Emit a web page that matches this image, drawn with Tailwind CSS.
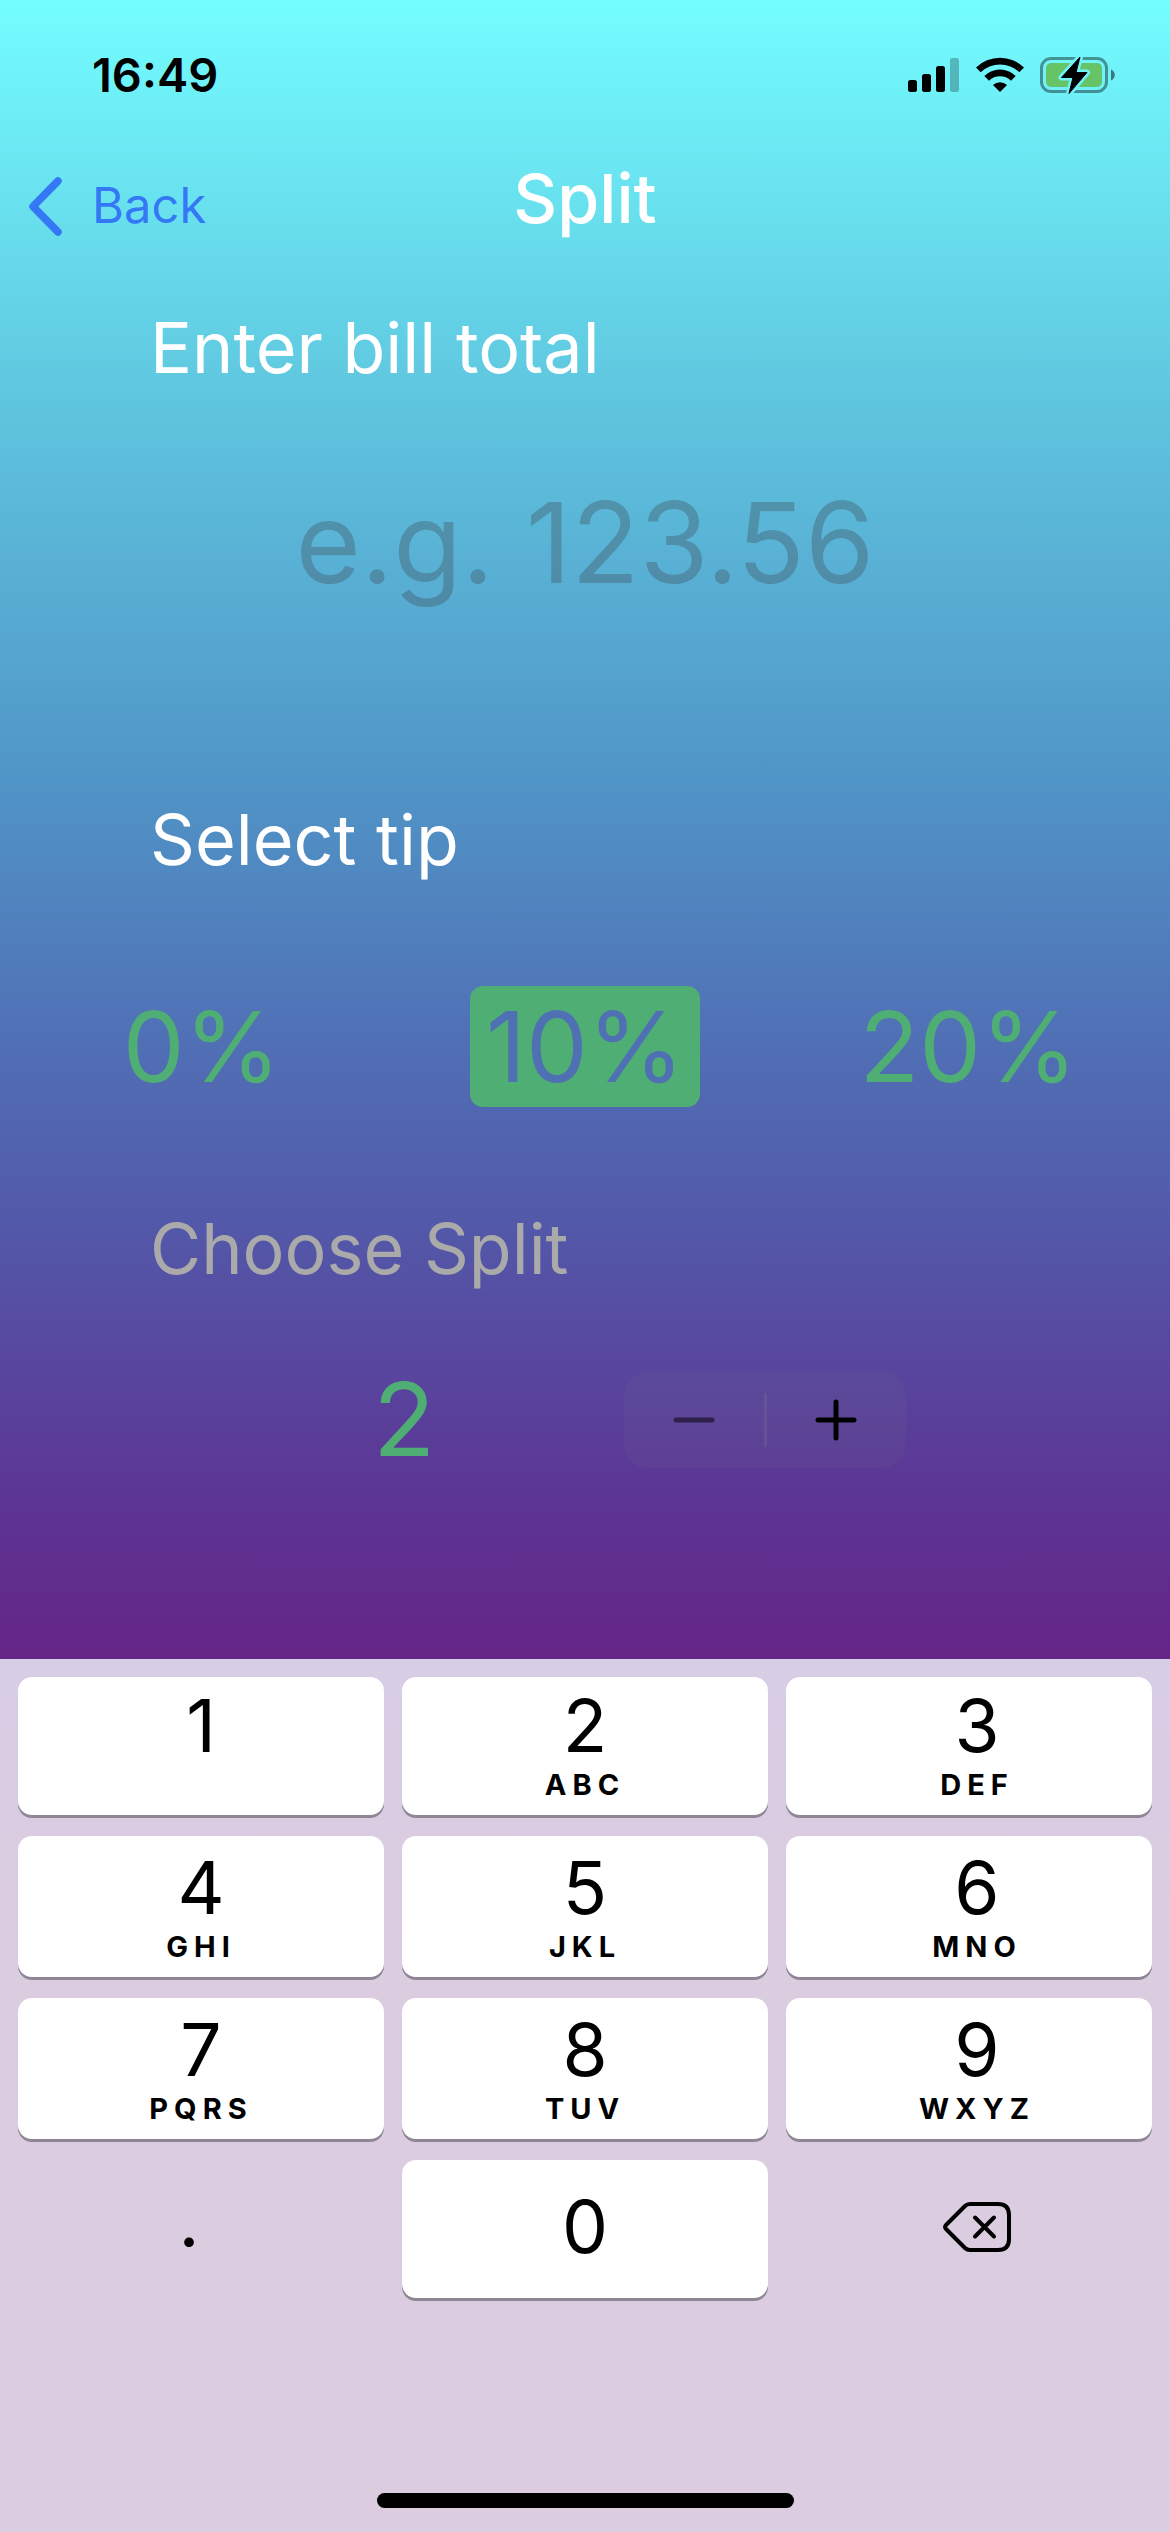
<!DOCTYPE html>
<html lang="en">
<head>
<meta charset="utf-8">
<meta name="viewport" content="width=device-width, initial-scale=1">
<title>Split</title>
<script src="https://cdn.jsdelivr.net/npm/@tailwindcss/browser@4"></script>
</head>
<body class="flex min-h-screen flex-col bg-[#dbcddf] font-['Inter',sans-serif] text-black">

<div class="flex grow flex-col bg-[linear-gradient(to_bottom,#73fdff_0%,#5fc6df_24%,#5095c7_47%,#506fb5_63%,#5358a9_74%,#5c3694_90%,#652587_100%)]">
  <!-- Status bar -->
  <div class="flex h-[150px] items-center justify-between pr-[54px] pl-[92px]">
    <time class="text-[47px] leading-[54px] font-semibold">16:49</time>
    <div class="flex items-center gap-4">
      <svg class="h-9 w-[52px]" viewBox="0 0 52 36" aria-hidden="true">
        <rect x="0" y="23" width="9" height="12" rx="2.5"/>
        <rect x="14" y="17" width="9" height="18" rx="2.5"/>
        <rect x="28" y="9" width="9" height="26" rx="2.5"/>
        <rect x="42" y="1" width="9" height="34" rx="2.5" fill-opacity=".25"/>
      </svg>
      <svg class="h-9 w-12" viewBox="0 0 48 36" aria-hidden="true">
        <path d="M0 10.5A34.5 34.5 0 0 1 48 10.5L43.3 15.2A27.8 27.8 0 0 0 4.7 15.2Z"/>
        <path d="M8.3 19A22.5 22.5 0 0 1 39.7 19L35 23.7A15.8 15.8 0 0 0 13 23.7Z"/>
        <path d="M17 28A10.5 10.5 0 0 1 31 28L24 35Z"/>
      </svg>
      <svg class="h-[38px] w-[76px]" viewBox="0 0 76 38" aria-hidden="true">
        <defs>
          <mask id="bolt-gap">
            <rect width="76" height="38" fill="#fff"/>
            <path d="M40 1 21.5 21.5H33L29 37.5 47 16.5H36Z" fill="#000" stroke="#000" stroke-width="6" stroke-linejoin="round"/>
          </mask>
        </defs>
        <g mask="url(#bolt-gap)">
          <rect x="1.5" y="2.5" width="65" height="33" rx="9.5" fill="none" stroke="#000" stroke-opacity=".4" stroke-width="3"/>
          <rect x="6" y="7" width="56" height="24" rx="5" fill="#66c466"/>
        </g>
        <path d="M71 13.5C76 15.5 76 22.5 71 24.5Z" fill-opacity=".5"/>
        <path d="M40 1 21.5 21.5H33L29 37.5 47 16.5H36Z" stroke="#000" stroke-linejoin="round"/>
      </svg>
    </div>
  </div>

  <!-- Navigation bar -->
  <header class="grid h-[116px] grid-cols-3 items-center">
    <a href="#" class="flex items-center gap-7 pb-1 pl-7 text-[#3478f6]">
      <svg class="h-[60px] w-9" viewBox="0 0 36 60" fill="none" stroke="currentColor" stroke-width="7.5" stroke-linecap="round" stroke-linejoin="round" aria-hidden="true"><path d="M30 5 5 30.500 30 56"/></svg>
      <span class="text-[49px] leading-[60px]">Back</span>
    </a>
    <h1 class="pb-5 text-center text-[68px] leading-[84px] font-medium text-white">Split</h1>
  </header>

  <main class="flex flex-col pt-9 pb-[179px]">
    <label for="bill" class="px-[150px] text-[70px] leading-[92px] text-white">Enter bill total</label>
    <input id="bill" type="text" inputmode="decimal" placeholder="e.g. 123.56" class="mt-18 h-[152px] w-full bg-transparent text-center text-[112px] text-black outline-none placeholder:text-[#3c3c43]/30">

    <h2 class="mt-44 px-[150px] text-[70px] leading-[92px] text-white">Select tip</h2>
    <div class="mt-25 grid grid-cols-3 justify-items-center px-2.5 text-[98px] leading-[121px] text-[#4fae73]">
      <button type="button" class="px-4">0%</button>
      <button type="button" class="rounded-[13px] bg-[#4fae73] px-4 text-[#5070b4]" aria-pressed="true">10%</button>
      <button type="button" class="px-4">20%</button>
    </div>

    <h2 class="mt-24 px-[150px] text-[70px] leading-[92px] text-[#aaaaaa]">Choose Split</h2>
    <div class="mt-16 flex items-center justify-center">
      <output class="w-[360px] pr-20 text-center text-[102px] leading-[121px] text-[#4fae73]">2</output>
      <div class="flex h-24 w-[282px] items-center rounded-3xl bg-[#767680]/12">
        <button type="button" class="flex h-full flex-1 items-center justify-center" aria-label="Decrease split" disabled>
          <svg class="size-[42px]" viewBox="0 0 42 42" fill="none" stroke="#000" stroke-opacity=".5" stroke-width="5" stroke-linecap="round" aria-hidden="true"><path d="M3 21H39"/></svg>
        </button>
        <span class="h-[54px] w-[3px] rounded-full bg-[#8e8e93]/20"></span>
        <button type="button" class="flex h-full flex-1 items-center justify-center" aria-label="Increase split">
          <svg class="size-[42px]" viewBox="0 0 42 42" fill="none" stroke="#000" stroke-width="5" stroke-linecap="round" aria-hidden="true"><path d="M3 21H39M21 3V39"/></svg>
        </button>
      </div>
    </div>
  </main>
</div>

<!-- Number pad -->
<section class="flex flex-col bg-linear-to-b from-[#d7cde5] via-[#dbcce0] via-30% to-[#dbcddf]" aria-label="Number pad">
  <div class="grid grid-cols-3 gap-x-[18px] gap-y-[21px] px-[18px] pt-[18px]">
    <button type="button" class="flex h-[138px] flex-col items-center justify-end gap-2 rounded-[14px] bg-white pb-[15px] shadow-[0_3px_0_#8e8695]"><span class="text-[73px] leading-[72px]">1</span><span class="h-[30px]"></span></button>
    <button type="button" class="flex h-[138px] flex-col items-center justify-end gap-2 rounded-[14px] bg-white pb-[15px] shadow-[0_3px_0_#8e8695]"><span class="text-[73px] leading-[72px]">2</span><span class="text-[29px] leading-[30px] font-bold tracking-[6px]">ABC</span></button>
    <button type="button" class="flex h-[138px] flex-col items-center justify-end gap-2 rounded-[14px] bg-white pb-[15px] pl-4 shadow-[0_3px_0_#8e8695]"><span class="text-[73px] leading-[72px]">3</span><span class="text-[29px] leading-[30px] font-bold tracking-[6px]">DEF</span></button>
    <button type="button" class="flex h-[141px] flex-col items-center justify-end gap-2 rounded-[14px] bg-white pb-[15px] shadow-[0_3px_0_#8e8695]"><span class="text-[73px] leading-[72px]">4</span><span class="text-[29px] leading-[30px] font-bold tracking-[6px]">GHI</span></button>
    <button type="button" class="flex h-[141px] flex-col items-center justify-end gap-2 rounded-[14px] bg-white pb-[15px] shadow-[0_3px_0_#8e8695]"><span class="text-[73px] leading-[72px]">5</span><span class="text-[29px] leading-[30px] font-bold tracking-[6px]">JKL</span></button>
    <button type="button" class="flex h-[141px] flex-col items-center justify-end gap-2 rounded-[14px] bg-white pb-[15px] pl-4 shadow-[0_3px_0_#8e8695]"><span class="text-[73px] leading-[72px]">6</span><span class="text-[29px] leading-[30px] font-bold tracking-[6px]">MNO</span></button>
    <button type="button" class="flex h-[141px] flex-col items-center justify-end gap-2 rounded-[14px] bg-white pb-[15px] shadow-[0_3px_0_#8e8695]"><span class="text-[73px] leading-[72px]">7</span><span class="text-[29px] leading-[30px] font-bold tracking-[6px]">PQRS</span></button>
    <button type="button" class="flex h-[141px] flex-col items-center justify-end gap-2 rounded-[14px] bg-white pb-[15px] shadow-[0_3px_0_#8e8695]"><span class="text-[73px] leading-[72px]">8</span><span class="text-[29px] leading-[30px] font-bold tracking-[6px]">TUV</span></button>
    <button type="button" class="flex h-[141px] flex-col items-center justify-end gap-2 rounded-[14px] bg-white pb-[15px] pl-4 shadow-[0_3px_0_#8e8695]"><span class="text-[73px] leading-[72px]">9</span><span class="text-[29px] leading-[30px] font-bold tracking-[6px]">WXYZ</span></button>
    <button type="button" class="flex h-[138px] items-center justify-center pr-6 pb-4 text-[73px] leading-[72px]">.</button>
    <button type="button" class="flex h-[138px] items-center justify-center rounded-[14px] bg-white pb-1 text-[73px] leading-[72px] shadow-[0_3px_0_#8e8695]">0</button>
    <button type="button" class="flex h-[138px] items-center justify-center pb-1 pl-4" aria-label="Delete">
      <svg class="h-[50px] w-[68px]" viewBox="0 0 68 50" fill="none" stroke="#000" stroke-width="4" stroke-linecap="round" stroke-linejoin="round" aria-hidden="true">
        <path d="M27 2H55Q66 2 66 13V37Q66 48 55 48H27Q24 48 22 46L3 27Q1 25 3 23L22 4Q24 2 27 2Z"/>
        <path d="M32 15.5 51 34.5M51 15.5 32 34.5"/>
      </svg>
    </button>
  </div>
  <div class="flex justify-center pt-[195px] pb-6"><span class="h-[15px] w-[417px] rounded-full bg-black"></span></div>
</section>
</body>
</html>
